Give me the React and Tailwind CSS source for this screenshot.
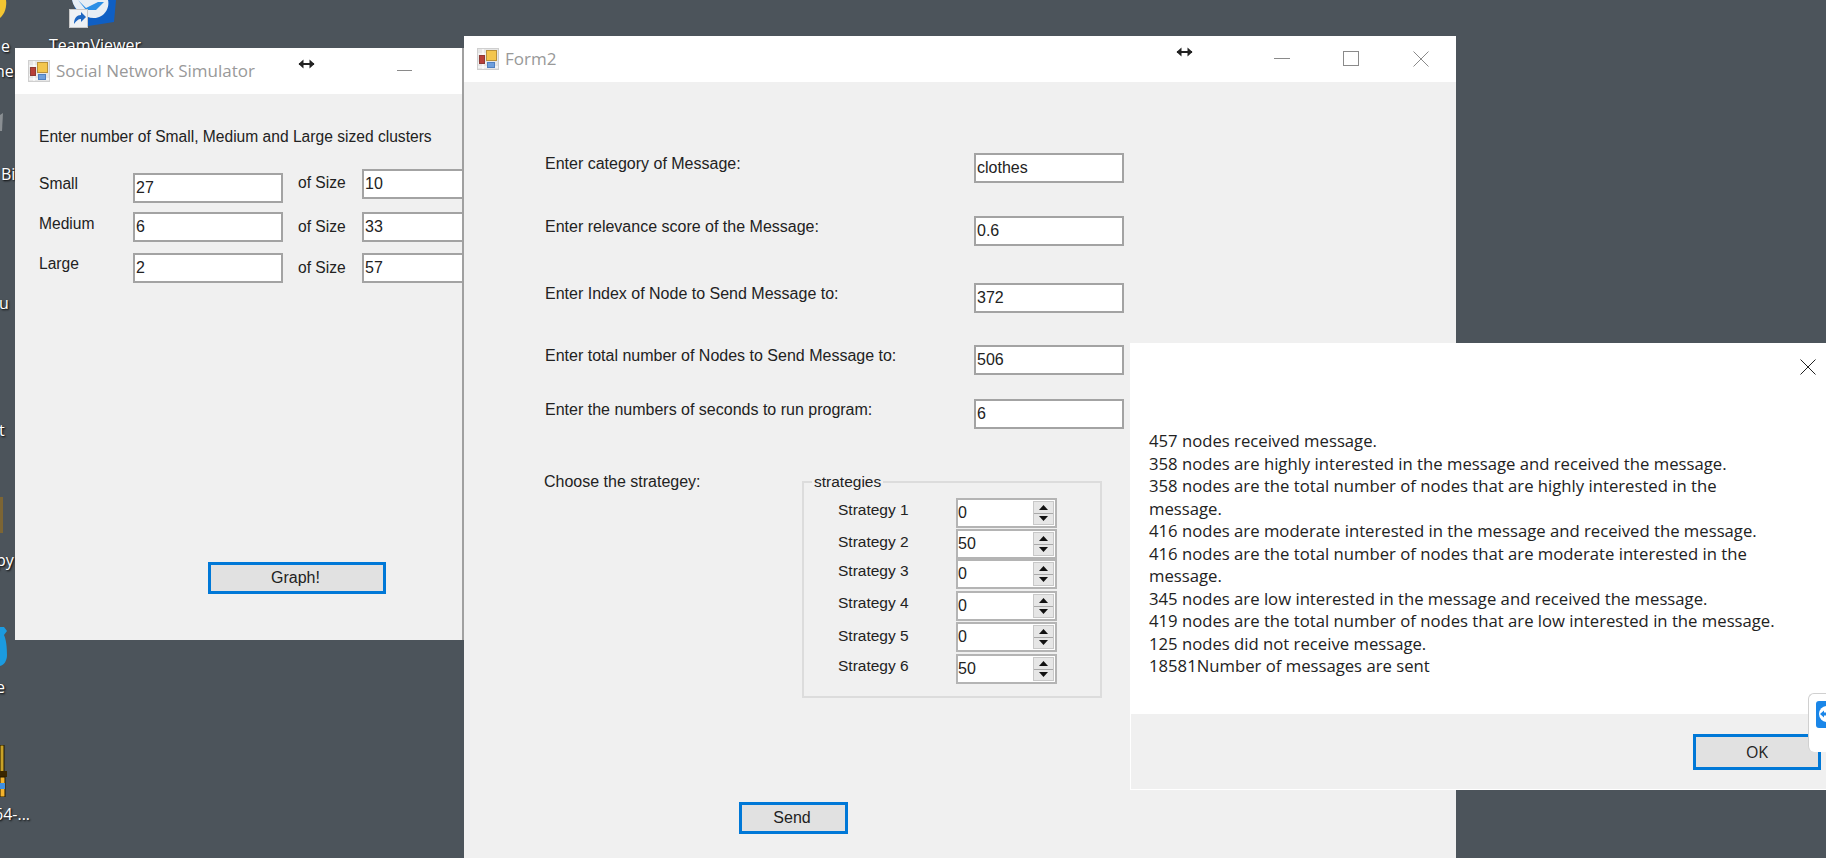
import React from "react";

const FORM = { fontFamily: '"Liberation Sans", Arial, sans-serif' };
const UI = { fontFamily: '"Open Sans", "Noto Sans", sans-serif' };

function AppIcon() {
  return (
    <svg width="22" height="22" viewBox="0 0 22 22" className="shrink-0">
      <rect x="0" y="0" width="22" height="22" fill="#cfcfcf" />
      <rect x="1" y="1" width="20" height="20" fill="#e6e6e6" />
      <path d="M1 6h8M1 15h8M6 1v20M1 19h20" stroke="#fff" strokeWidth="1.2" />
      <rect x="9.5" y="2.5" width="10" height="10" fill="#f3c64e" stroke="#b9913a" />
      <rect x="2.5" y="7.5" width="5" height="8" fill="#b8403a" stroke="#8f3a35" />
      <rect x="10.5" y="14.5" width="7" height="5" fill="#6f9fdc" stroke="#4f80c0" />
    </svg>
  );
}

function ResizeArrow() {
  return (
    <svg width="17" height="10" viewBox="0 0 17 10">
      <path d="M1 5h15" stroke="#222" strokeWidth="2" />
      <path d="M0.5 5 5.5 0.5v9zM16.5 5 11.5 0.5v9z" fill="#222" />
    </svg>
  );
}

function Field({ children, className = "" }) {
  return (
    <div className={"w-[150px] h-[30px] shrink-0 border-2 border-[#a3a3a3] bg-white pl-px text-[16px] leading-[26px] text-[#222] " + className}>
      {children}
    </div>
  );
}

function ActionButton({ children, className = "" }) {
  return (
    <div className={"border-[3px] border-[#0078d7] bg-[#e1e1e1] flex items-center justify-center text-[16px] text-[#222] " + className}>
      {children}
    </div>
  );
}

function Spinner({ value }) {
  return (
    <div className="w-[101px] h-[30px] border-2 border-[#b4b4b4] bg-white flex shrink-0">
      <div className="flex-1 text-[16px] leading-[26px] text-[#222]">{value}</div>
      <div className="w-[21px] mr-[1px] my-[1px] flex flex-col bg-[#e6e6e6] border border-[#c8c8c8]">
        <div className="flex-1 flex items-center justify-center border-b border-[#a8a8a8]">
          <svg width="9" height="5" viewBox="0 0 9 5"><path d="M4.5 0 9 5H0z" fill="#111" /></svg>
        </div>
        <div className="flex-1 flex items-center justify-center">
          <svg width="9" height="5" viewBox="0 0 9 5"><path d="M0 0h9L4.5 5z" fill="#111" /></svg>
        </div>
      </div>
    </div>
  );
}

const fieldRows = [
  { label: "Enter category of Message:", value: "clothes", mt: "mt-[71px]" },
  { label: "Enter relevance score of the Message:", value: "0.6", mt: "mt-[33px]" },
  { label: "Enter Index of Node to Send Message to:", value: "372", mt: "mt-[37px]" },
  { label: "Enter total number of Nodes to Send Message to:", value: "506", mt: "mt-[32px]" },
  { label: "Enter the numbers of seconds to run program:", value: "6", mt: "mt-[24px]" },
];

const strategyRows = [
  { label: "Strategy 1", value: "0", mt: "mt-0", lab: "pt-[2px]" },
  { label: "Strategy 2", value: "50", mt: "mt-[1px]", lab: "pt-[3px]" },
  { label: "Strategy 3", value: "0", mt: "mt-0", lab: "pt-[2px]" },
  { label: "Strategy 4", value: "0", mt: "mt-[2px]", lab: "pt-[2px]" },
  { label: "Strategy 5", value: "0", mt: "mt-[1px]", lab: "pt-[4px]" },
  { label: "Strategy 6", value: "50", mt: "mt-[2px]", lab: "pt-[2px]" },
];

const messageLines = [
  "457 nodes received message.",
  "358 nodes are highly interested in the message and received the message.",
  "358 nodes are the total number of nodes that are highly interested in the",
  "message.",
  "416 nodes are moderate interested in the message and received the message.",
  "416 nodes are the total number of nodes that are moderate interested in the",
  "message.",
  "345 nodes are low interested in the message and received the message.",
  "419 nodes are the total number of nodes that are low interested in the message.",
  "125 nodes did not receive message.",
  "18581Number of messages are sent",
];

const desktopLabels = [
  { t: "e", c: "left-[1px] top-[34px]" },
  { t: "ne", c: "left-[-5px] top-[59px]" },
  { t: "Bi", c: "left-[1px] top-[162px]" },
  { t: "u", c: "left-[-1px] top-[291px]" },
  { t: "t", c: "left-[-1px] top-[418px]" },
  { t: "py", c: "left-[-4px] top-[548px]" },
  { t: "e", c: "left-[-4px] top-[675px]" },
  { t: "64-...", c: "left-[-6px] top-[802px]" },
  { t: "TeamViewer", c: "left-[49px] top-[33px]" },
];

export default function App() {
  return (
    <div className="relative w-[1826px] h-[858px] overflow-hidden bg-[#4c545b]">
      {/* desktop icons */}
      {desktopLabels.map((d, i) => (
        <div
          key={i}
          style={UI}
          className={"absolute text-[16px] leading-[24px] text-white whitespace-nowrap [text-shadow:1px_1px_2px_#000] " + d.c}
        >
          {d.t}
        </div>
      ))}
      <svg className="absolute left-0 top-0" width="8" height="20" viewBox="0 0 8 20">
        <path d="M0 0h6c1 6-1 14-6 18z" fill="#f4c531" />
      </svg>
      <svg className="absolute left-0 top-[113px]" width="3" height="18" viewBox="0 0 3 18">
        <path d="M0 2 3 0 2 18H0z" fill="#8a8f93" />
      </svg>
      <svg className="absolute left-0 top-[497px]" width="3" height="36" viewBox="0 0 3 36">
        <rect width="3" height="36" fill="#7c6534" />
      </svg>
      <svg className="absolute left-0 top-[627px]" width="7" height="39" viewBox="0 0 7 39">
        <path d="M0 0h4l3 4-3 4c3 6 3 18 3 20 0 6-3 10-7 11z" fill="#1b9be0" />
      </svg>
      <svg className="absolute left-0 top-[745px]" width="7" height="52" viewBox="0 0 7 52">
        <rect width="4" height="28" fill="#c9a227" stroke="#1c1400" />
        <rect y="26" width="7" height="6" fill="#3a2600" />
        <rect y="32" width="5" height="20" fill="#f4b32c" stroke="#1c1400" />
        <rect y="38" width="5" height="6" fill="#3f8fe0" />
      </svg>
      <svg className="absolute left-[68px] top-0" width="50" height="30" viewBox="0 0 50 30">
        <path d="M4 0h44l-2 22-32 5z" fill="#0f5fc4" />
        <path d="M4 0h36c2 8-4 18-14 18S6 10 4 0z" fill="#e8eef4" />
        <path d="M10 0 18 8 30 2l6 0-8 8-10 0z" fill="#2b8fe6" />
        <rect x="1.5" y="9.5" width="18" height="18" fill="#eef1f5" stroke="#c8c8c8" />
        <path d="M6 24c0-6 3-9 7-9v-3l5 5-5 5v-3c-3 0-5 2-7 5z" fill="#1d66c2" />
      </svg>

      {/* Social Network Simulator window */}
      <div style={FORM} className="absolute left-[15px] top-[48px] w-[449px] h-[592px] overflow-hidden bg-[#f0f0f0] border-r-2 border-[#a0a0a0]">
        <div className="relative h-[46px] bg-white flex items-center pl-[13px] gap-[6px]">
          <AppIcon />
          <span style={UI} className="text-[17px] text-[#999]">Social Network Simulator</span>
          <div className="absolute left-[283px] top-[11px]"><ResizeArrow /></div>
          <div className="absolute left-[382px] top-[22px] w-[15px] h-px bg-[#8a8a8a]" />
        </div>
        <div className="pl-[24px] pt-[33px] text-[15.6px] leading-[20px] text-[#222]">
          <div className="whitespace-nowrap">Enter number of Small, Medium and Large sized clusters</div>
          <div className="flex items-start mt-[22px] w-[600px]">
            <div className="w-[94px] mt-[5px]">Small</div>
            <Field className="mt-[4px]">27</Field>
            <div className="ml-[15px] w-[64px] mt-[4px]">of Size</div>
            <Field>10</Field>
          </div>
          <div className="flex items-start mt-[9px] w-[600px]">
            <div className="w-[94px] mt-[2px]">Medium</div>
            <Field>6</Field>
            <div className="ml-[15px] w-[64px] mt-[5px]">of Size</div>
            <Field>33</Field>
          </div>
          <div className="flex items-start mt-[11px] w-[600px]">
            <div className="w-[94px] mt-px">Large</div>
            <Field>2</Field>
            <div className="ml-[15px] w-[64px] mt-[5px]">of Size</div>
            <Field>57</Field>
          </div>
          <ActionButton className="ml-[169px] mt-[279px] w-[178px] h-[32px] pr-[3px]">Graph!</ActionButton>
        </div>
      </div>

      {/* Form2 window */}
      <div style={FORM} className="absolute left-[464px] top-[36px] w-[992px] h-[822px] overflow-hidden bg-[#f0f0f0]">
        <div className="relative h-[46px] bg-white flex items-center pl-[13px] gap-[6px]">
          <AppIcon />
          <span style={UI} className="text-[17px] text-[#999]">Form2</span>
          <div className="absolute left-[712px] top-[11px]"><ResizeArrow /></div>
          <div className="absolute left-[810px] top-[22px] w-[16px] h-px bg-[#8a8a8a]" />
          <div className="absolute left-[879px] top-[15px] w-[16px] h-[15px] border border-[#8a8a8a]" />
          <svg className="absolute left-[949px] top-[15px]" width="16" height="16" viewBox="0 0 16 16">
            <path d="M0.5 0.5 15.5 15.5M15.5 0.5 0.5 15.5" stroke="#8a8a8a" strokeWidth="1" />
          </svg>
        </div>
        <div className="pl-[81px] text-[16px] leading-[20px] text-[#222]">
          {fieldRows.map((r) => (
            <div key={r.label} className={"flex items-start " + r.mt}>
              <div className="w-[429px] pt-px whitespace-nowrap">{r.label}</div>
              <Field>{r.value}</Field>
            </div>
          ))}
          <div className="flex items-start mt-[42px]">
            <div className="w-[257px] -ml-px mr-px pt-px whitespace-nowrap">Choose the strategey:</div>
            <div className="relative mt-[10px] w-[300px] h-[217px] border-2 border-[#dcdcdc] pt-[15px] pl-[34px] text-[15.5px]">
              <div className="absolute left-[8px] top-[-11px] bg-[#f0f0f0] px-[2px]">strategies</div>
              {strategyRows.map((r) => (
                <div key={r.label} className={"flex items-start " + r.mt}>
                  <div className={"w-[118px] whitespace-nowrap " + r.lab}>{r.label}</div>
                  <Spinner value={r.value} />
                </div>
              ))}
            </div>
          </div>
          <ActionButton className="ml-[194px] mt-[104px] w-[109px] h-[32px] pr-[3px]">Send</ActionButton>
        </div>
      </div>

      {/* Message dialog */}
      <div style={UI} className="absolute left-[1130px] top-[343px] w-[696px] h-[447px] bg-white border-l border-b border-white flex flex-col">
        <div className="h-[48px] shrink-0 flex items-center justify-end pr-[10px]">
          <svg width="16" height="16" viewBox="0 0 16 16">
            <path d="M0.5 0.5 15.5 15.5M15.5 0.5 0.5 15.5" stroke="#222" strokeWidth="1" />
          </svg>
        </div>
        <div className="flex-1 pl-[18px] pt-[39px] text-[16.7px] leading-[22.5px] text-[#222] whitespace-nowrap">
          {messageLines.map((l, i) => (
            <div key={i}>{l}</div>
          ))}
        </div>
        <div className="h-[75px] shrink-0 bg-[#f0f0f0] flex justify-end items-start pt-[20px] pr-[5px]">
          <ActionButton className="w-[128px] h-[36px]">OK</ActionButton>
        </div>
      </div>

      {/* TeamViewer side widget */}
      <div className="absolute left-[1808px] top-[693px] w-[18px] h-[59px] bg-white rounded-l-[6px] border-l border-t border-[#d0d0d0] pl-[7px] pt-[7px]">
        <svg width="11" height="27" viewBox="0 0 11 27">
          <rect width="16" height="27" rx="3" fill="#1a86e8" />
          <circle cx="11" cy="13" r="8" fill="#fff" />
          <path d="M4 13 8 9.5v2h3v3H8v2z" fill="#1a86e8" />
        </svg>
      </div>
    </div>
  );
}
